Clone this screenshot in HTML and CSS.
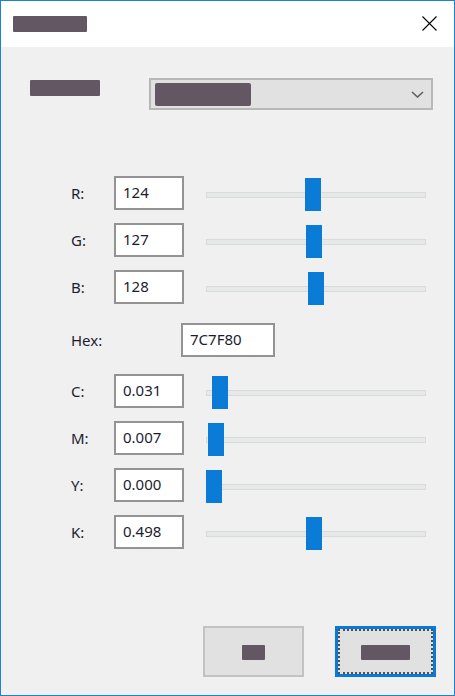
FILE: index.html
```html
<!DOCTYPE html>
<html>
<head>
<meta charset="utf-8">
<link rel="stylesheet" href="styles.css">
</head>
<body>
<div class="window">
  <div class="titlebar">
    <span class="ph title-ph"></span>
    <svg class="close" width="15" height="15" viewBox="0 0 15 15"><path d="M0.5 0.5 L14.5 14.5 M14.5 0.5 L0.5 14.5" stroke="#000" stroke-width="1.1" fill="none"/></svg>
  </div>
  <div class="content">
    <div class="combo-row">
      <div class="combo-label"><span class="ph lbl-ph"></span></div>
      <div class="combo">
        <span class="ph combo-ph"></span>
        <svg class="chev" width="13" height="7" viewBox="0 0 13 7"><path d="M1 1 L6.5 6 L12 1" stroke="#606060" stroke-width="1.6" fill="none"/></svg>
      </div>
    </div>
    <div class="rows">
      <div class="row"><span class="lbl">R:</span><div class="field">124</div><div class="slider"><div class="track"></div><div class="thumb" style="left:99px"></div></div></div>
      <div class="row"><span class="lbl">G:</span><div class="field">127</div><div class="slider"><div class="track"></div><div class="thumb" style="left:100px"></div></div></div>
      <div class="row"><span class="lbl">B:</span><div class="field">128</div><div class="slider"><div class="track"></div><div class="thumb" style="left:102px"></div></div></div>
      <div class="row hex-row"><span class="lbl hex-lbl">Hex:</span><div class="field hex">7C7F80</div></div>
      <div class="row"><span class="lbl">C:</span><div class="field">0.031</div><div class="slider"><div class="track"></div><div class="thumb" style="left:6px"></div></div></div>
      <div class="row"><span class="lbl">M:</span><div class="field">0.007</div><div class="slider"><div class="track"></div><div class="thumb" style="left:2px"></div></div></div>
      <div class="row"><span class="lbl">Y:</span><div class="field">0.000</div><div class="slider"><div class="track"></div><div class="thumb" style="left:0px"></div></div></div>
      <div class="row"><span class="lbl">K:</span><div class="field">0.498</div><div class="slider"><div class="track"></div><div class="thumb" style="left:100px"></div></div></div>
    </div>
    <div class="buttons">
      <div class="btn"><span class="ph ok-ph"></span></div>
      <div class="btn default"><div class="focus"><span class="ph cancel-ph"></span></div></div>
    </div>
  </div>
</div>
</body>
</html>
```
FILE: styles.css
```css
html, body {
  margin: 0;
  padding: 0;
  background: #f0f0f0;
}
body {
  font-family: "Noto Sans", "Open Sans", sans-serif;
  font-size: 15px;
  color: #1c1c30;
}
.window {
  width: 455px;
  height: 696px;
  box-sizing: border-box;
  border: 1px solid #1883d7;
  display: flex;
  flex-direction: column;
  background: #f0f0f0;
}
.titlebar {
  height: 46px;
  flex: none;
  background: #fff;
  display: flex;
  align-items: flex-start;
  justify-content: space-between;
  padding: 15px 17px 0 12px;
  box-sizing: border-box;
}
.ph {
  display: block;
  background: #625763;
  border-radius: 1px;
}
.title-ph { width: 74px; height: 16px; }
.close { display: block; }
.content {
  flex: 1;
  display: flex;
  flex-direction: column;
}
.combo-row {
  display: flex;
  align-items: flex-start;
  margin-top: 31px;
  padding-left: 29px;
}
.combo-label {
  width: 119px;
  padding-top: 2px;
}
.lbl-ph { width: 70px; height: 16px; }
.combo {
  width: 284px;
  height: 32px;
  box-sizing: border-box;
  border: 2px solid #b8b8b8;
  background: #e1e1e1;
  display: flex;
  align-items: center;
  justify-content: space-between;
  padding: 0 7px 0 4px;
}
.combo-ph { width: 96px; height: 23px; border-radius: 2px; }
.chev { display: block; margin-top: 1px; }
.rows {
  margin-top: 66px;
  padding-left: 70px;
  display: flex;
  flex-direction: column;
  gap: 13px;
}
.row {
  display: flex;
  align-items: center;
  height: 34px;
}
.lbl {
  width: 43px;
  flex: none;
}
.hex-lbl { width: 110px; }
.hex-row { margin-top: 6px; margin-bottom: 4px; }
.field {
  width: 70px;
  height: 34px;
  box-sizing: border-box;
  border: 2px solid #939393;
  background: #fff;
  padding: 0 0 2px 7px;
  display: flex;
  align-items: center;
  flex: none;
}
.field.hex { width: 94px; }
.slider {
  position: relative;
  width: 220px;
  height: 34px;
  margin-left: 22px;
  flex: none;
}
.track {
  position: absolute;
  left: 0;
  right: 0;
  top: 16px;
  height: 6px;
  box-sizing: border-box;
  border: 1px solid #d9dbdb;
  background: #e7e9e9;
}
.thumb {
  position: absolute;
  top: 2px;
  width: 16px;
  height: 33px;
  background: #0b7bd8;
}
.buttons {
  margin-top: auto;
  display: flex;
  justify-content: flex-end;
  gap: 31px;
  padding: 0 18px 18px 0;
}
.btn {
  width: 101px;
  height: 51px;
  box-sizing: border-box;
  border: 2px solid #c2c2c2;
  background: #e1e1e1;
  display: flex;
  align-items: center;
  justify-content: center;
}
.btn.default {
  border: 3px solid #0a78d7;
}
.focus {
  width: 100%;
  height: 100%;
  box-sizing: border-box;
  border: 2px dotted #505050;
  display: flex;
  align-items: center;
  justify-content: center;
}
.ok-ph { width: 23px; height: 15px; margin-top: 1px; }
.cancel-ph { width: 49px; height: 15px; margin-top: 1px; }
```
